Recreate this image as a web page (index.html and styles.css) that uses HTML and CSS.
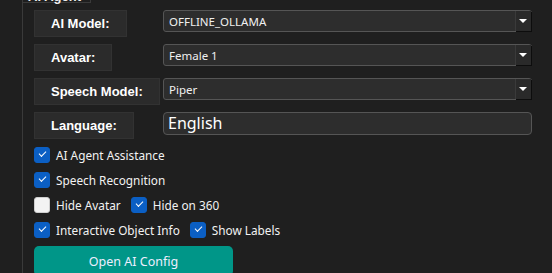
FILE: index.html
```html
<!DOCTYPE html>
<html lang="en">
<head>
    <meta charset="UTF-8">
    <title>AI Agent</title>
    <link rel="stylesheet" href="styles.css">
</head>
<body>
<div class="group">
    <div class="group-title">AI Agent</div>

    <div class="form">
        <div class="label">AI Model:</div>
        <div class="combo"><span>OFFLINE_OLLAMA</span><div class="drop"></div></div>

        <div class="label">Avatar:</div>
        <div class="combo"><span>Female 1</span><div class="drop"></div></div>

        <div class="label">Speech Model:</div>
        <div class="combo"><span>Piper</span><div class="drop"></div></div>

        <div class="label">Language:</div>
        <div class="input">English</div>
    </div>

    <div class="checks">
        <div class="check-row">
            <label class="check"><span class="box on"></span>AI Agent Assistance</label>
        </div>
        <div class="check-row">
            <label class="check"><span class="box on"></span>Speech Recognition</label>
        </div>
        <div class="check-row">
            <label class="check"><span class="box"></span>Hide Avatar</label>
            <label class="check"><span class="box on"></span>Hide on 360</label>
        </div>
        <div class="check-row">
            <label class="check"><span class="box on"></span>Interactive Object Info</label>
            <label class="check"><span class="box on"></span>Show Labels</label>
        </div>
    </div>

    <button class="config-btn">Open AI Config</button>
</div>
</body>
</html>
```

FILE: styles.css
```css
html, body {
    margin: 0;
    padding: 0;
    background: #1f1f1f;
    overflow: hidden;
    height: 273px;
}

body {
    font-family: 'Noto Sans', 'Liberation Sans', sans-serif;
    color: #f0f0f0;
}

.group {
    margin: -13px 0 0 22px;
    width: 520px;
    height: 300px;
    border-left: 1px solid #3a3a3a;
    border-right: 1px solid #3a3a3a;
    padding: 0 0 0 11px;
}

.group-title {
    margin-left: -11px;
    width: 68px;
    height: 16px;
    border: 1px solid #3a3a3a;
    border-left: none;
    font-family: 'Liberation Sans', Arial, sans-serif;
    font-size: 13px;
    font-weight: bold;
    line-height: 13px;
    padding: 2px 0 0 5px;
    box-sizing: border-box;
    color: #eee;
}

.form {
    margin-top: 7px;
    display: grid;
    grid-template-columns: 129px 369px;
    grid-auto-rows: 27px;
    row-gap: 7px;
}

.label {
    justify-self: start;
    height: 27px;
    padding: 0 16px;
    background: #2b2b2b;
    border: 1px solid #323232;
    box-sizing: border-box;
    font-family: 'Liberation Sans', Arial, sans-serif;
    font-weight: bold;
    font-size: 13px;
    line-height: 26px;
    color: #fff;
}

.combo {
    height: 22px;
    background: #2d2d2d;
    border: 1px solid #555;
    border-radius: 3px;
    box-sizing: border-box;
    display: flex;
    align-items: center;
    justify-content: space-between;
    font-size: 11.5px;
    padding-left: 5px;
}

.drop {
    width: 15px;
    height: 20px;
    background: #2a2a2a;
    border-left: 1px solid #3a3a3a;
    box-shadow: 1px 1px 0 #0d0d0d;
    position: relative;
}

.drop::after {
    content: '';
    position: absolute;
    left: 3px;
    top: 8px;
    border-left: 4px solid transparent;
    border-right: 4px solid transparent;
    border-top: 4px solid #fff;
}

.input {
    height: 23px;
    background: #2d2d2d;
    border: 1px solid #555;
    border-radius: 4px;
    box-sizing: border-box;
    font-size: 16px;
    line-height: 20px;
    padding-left: 4px;
    color: #fff;
}

.checks {
    margin-top: 8px;
    display: flex;
    flex-direction: column;
    gap: 9px;
}

.check-row {
    display: flex;
    gap: 10px;
    height: 16px;
}

.check {
    display: flex;
    align-items: center;
    gap: 6px;
    font-size: 11.8px;
    color: #f2f2f2;
}

.box {
    width: 16px;
    height: 16px;
    border-radius: 3px;
    background: #f3f3f3;
    border: 1px solid #cfcfcf;
    box-sizing: border-box;
    position: relative;
}

.box.on {
    background: #0b5fc4;
    border-color: #0b5fc4;
}

.box.on::after {
    content: '';
    position: absolute;
    left: 4px;
    top: 3px;
    width: 6px;
    height: 3px;
    border-left: 1px solid #fff;
    border-bottom: 1px solid #fff;
    transform: rotate(-45deg);
}

.config-btn {
    margin-top: 8px;
    width: 199px;
    height: 30px;
    border: none;
    border-radius: 5px;
    background: #009688;
    color: #eef;
    font-family: 'Noto Sans', sans-serif;
    font-size: 12.5px;
    padding: 0;
}
```
